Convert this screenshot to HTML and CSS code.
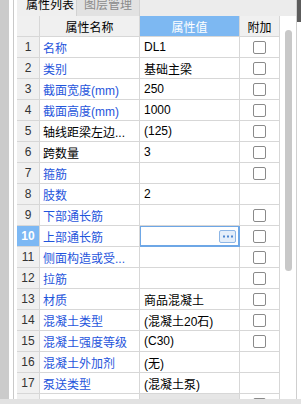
FILE: index.html
```html
<!DOCTYPE html>
<html lang="zh-CN">
<head>
    <meta charset="UTF-8">
    <title>属性列表</title>
    <link rel="stylesheet" href="styles.css">
</head>
<body>
    <div class="window">
        <div class="main">
            <div class="dock"></div>
            <div class="gutter"></div>
            <div class="panel">
                <div class="tabs">
                    <div class="tab active">属性列表</div>
                    <div class="tab">图层管理</div>
                </div>
                <div class="body">
                    <div class="grid">
                        <div class="row head">
                            <div class="cell num"></div>
                            <div class="cell hname">属性名称</div>
                            <div class="cell hval">属性值</div>
                            <div class="cell hadd">附加</div>
                        </div>
                        <div class="row">
                            <div class="cell num">1</div>
                            <div class="cell name">名称</div>
                            <div class="cell val">DL1</div>
                            <div class="cell add"><span class="box"></span></div>
                        </div>
                        <div class="row">
                            <div class="cell num">2</div>
                            <div class="cell name">类别</div>
                            <div class="cell val">基础主梁</div>
                            <div class="cell add"><span class="box"></span></div>
                        </div>
                        <div class="row">
                            <div class="cell num">3</div>
                            <div class="cell name">截面宽度(mm)</div>
                            <div class="cell val">250</div>
                            <div class="cell add"><span class="box"></span></div>
                        </div>
                        <div class="row">
                            <div class="cell num">4</div>
                            <div class="cell name">截面高度(mm)</div>
                            <div class="cell val">1000</div>
                            <div class="cell add"><span class="box"></span></div>
                        </div>
                        <div class="row">
                            <div class="cell num">5</div>
                            <div class="cell name plain">轴线距梁左边...</div>
                            <div class="cell val">(125)</div>
                            <div class="cell add"><span class="box"></span></div>
                        </div>
                        <div class="row">
                            <div class="cell num">6</div>
                            <div class="cell name plain">跨数量</div>
                            <div class="cell val">3</div>
                            <div class="cell add"><span class="box"></span></div>
                        </div>
                        <div class="row">
                            <div class="cell num">7</div>
                            <div class="cell name">箍筋</div>
                            <div class="cell val"></div>
                            <div class="cell add"><span class="box"></span></div>
                        </div>
                        <div class="row">
                            <div class="cell num">8</div>
                            <div class="cell name">肢数</div>
                            <div class="cell val">2</div>
                            <div class="cell add"></div>
                        </div>
                        <div class="row">
                            <div class="cell num">9</div>
                            <div class="cell name">下部通长筋</div>
                            <div class="cell val"></div>
                            <div class="cell add"><span class="box"></span></div>
                        </div>
                        <div class="row">
                            <div class="cell num current">10</div>
                            <div class="cell name">上部通长筋</div>
                            <div class="cell val editing">
                                <span class="more">
                                    <svg width="10" height="3" viewBox="0 0 10 3"><rect x="0" y="0.5" width="2" height="2" fill="#4d86d0"/><rect x="4" y="0.5" width="2" height="2" fill="#4d86d0"/><rect x="8" y="0.5" width="2" height="2" fill="#4d86d0"/></svg>
                                </span>
                            </div>
                            <div class="cell add"><span class="box"></span></div>
                        </div>
                        <div class="row">
                            <div class="cell num">11</div>
                            <div class="cell name">侧面构造或受...</div>
                            <div class="cell val"></div>
                            <div class="cell add"><span class="box"></span></div>
                        </div>
                        <div class="row">
                            <div class="cell num">12</div>
                            <div class="cell name">拉筋</div>
                            <div class="cell val"></div>
                            <div class="cell add"><span class="box"></span></div>
                        </div>
                        <div class="row">
                            <div class="cell num">13</div>
                            <div class="cell name">材质</div>
                            <div class="cell val">商品混凝土</div>
                            <div class="cell add"><span class="box"></span></div>
                        </div>
                        <div class="row">
                            <div class="cell num">14</div>
                            <div class="cell name">混凝土类型</div>
                            <div class="cell val">(混凝土20石)</div>
                            <div class="cell add"><span class="box"></span></div>
                        </div>
                        <div class="row">
                            <div class="cell num">15</div>
                            <div class="cell name">混凝土强度等级</div>
                            <div class="cell val">(C30)</div>
                            <div class="cell add"><span class="box"></span></div>
                        </div>
                        <div class="row">
                            <div class="cell num">16</div>
                            <div class="cell name">混凝土外加剂</div>
                            <div class="cell val">(无)</div>
                            <div class="cell add"></div>
                        </div>
                        <div class="row">
                            <div class="cell num">17</div>
                            <div class="cell name">泵送类型</div>
                            <div class="cell val">(混凝土泵)</div>
                            <div class="cell add"></div>
                        </div>
                        <div class="row">
                            <div class="cell num">18</div>
                            <div class="cell name">泵送高度</div>
                            <div class="cell val grey"></div>
                            <div class="cell add"><span class="box"></span></div>
                        </div>
                    </div>
                    <div class="vtrack"><div class="thumb"></div></div>
                </div>
            </div>
            <div class="edge"><div class="edge-top"></div></div>
        </div>
        <div class="hbar"></div>
    </div>
</body>
</html>
```

FILE: styles.css
```css
body {
    margin: 0;
    width: 301px;
    height: 404px;
    overflow: hidden;
    background: #fff;
    font-family: "Liberation Sans", "Noto Sans CJK SC", sans-serif;
    font-size: 12px;
    color: #000;
}

.window {
    display: flex;
    flex-direction: column;
    height: 404px;
}

.main {
    display: flex;
    height: 399px;
    flex-shrink: 0;
    overflow: hidden;
}

.dock {
    width: 9px;
    background: #cbcbcb;
}

.gutter {
    width: 4px;
    border-right: 1px solid #c9c9c9;
    margin-right: 3px;
}

.panel {
    width: 279px;
    border-right: 1px solid #cfcfcf;
    display: flex;
    flex-direction: column;
}

.edge {
    width: 4px;
}
.edge-top {
    height: 22px;
    background: #5c5c5c;
}

/* tab strip */
.tabs {
    height: 16px;
    flex-shrink: 0;
    display: flex;
    background: #ececec;
    overflow: hidden;
}
.tab {
    box-sizing: border-box;
    height: 16px;
    line-height: 11px;
    padding-left: 7px;
    color: #8a8a8a;
    background: #e2e2e2;
    border-right: 1px solid #d2d2d2;
    width: 63px;
}
.tab.active {
    width: 60px;
    padding-left: 9px;
    color: #000;
    background: #efefef;
}

.body {
    flex: 1;
    min-height: 0;
    overflow: hidden;
    display: flex;
}

/* property grid */
.grid {
    width: 263px;
}

.row {
    display: grid;
    grid-template-columns: 23px 100px 100px 40px;
    height: 21px;
}

.cell {
    box-sizing: border-box;
    border-right: 1px solid #d7d7d7;
    border-bottom: 1px solid #d7d7d7;
    display: flex;
    align-items: center;
    white-space: nowrap;
    overflow: hidden;
}

.num {
    background: #f0f0f0;
    justify-content: center;
    color: #333;
}
.num.current {
    background: #7cb8f4;
    color: #fff;
    font-weight: bold;
}

.head .cell {
    background: #f0f0f0;
    justify-content: center;
}
.head .hval {
    background: #7db8f2;
    color: #fff;
}

.name {
    padding-left: 3px;
    color: #1f55dc;
}
.name.plain {
    color: #000;
}

.val {
    padding-left: 4px;
}
.val.grey {
    background: #e6e6e6;
}
.val.editing {
    border-color: #6ea7e6;
    box-shadow: inset 0 0 0 1px #6ea7e6;
    justify-content: flex-end;
    padding-right: 3px;
}

.more {
    box-sizing: border-box;
    width: 17px;
    height: 13px;
    border: 1px solid #8db6e6;
    border-radius: 2px;
    background: #e4eefa;
    display: flex;
    align-items: center;
    justify-content: center;
}

.add {
    justify-content: center;
}
.box {
    box-sizing: border-box;
    width: 13px;
    height: 13px;
    border: 1px solid #8a8a8a;
    border-radius: 2px;
    background: #fff;
}

/* scrollbars */
.vtrack {
    width: 16px;
    padding-top: 14px;
}
.thumb {
    margin-left: 5px;
    width: 7px;
    height: 241px;
    border-radius: 4px;
    background: #c8c8c8;
}

.hbar {
    height: 5px;
    background: #e2e2e2;
}
```
